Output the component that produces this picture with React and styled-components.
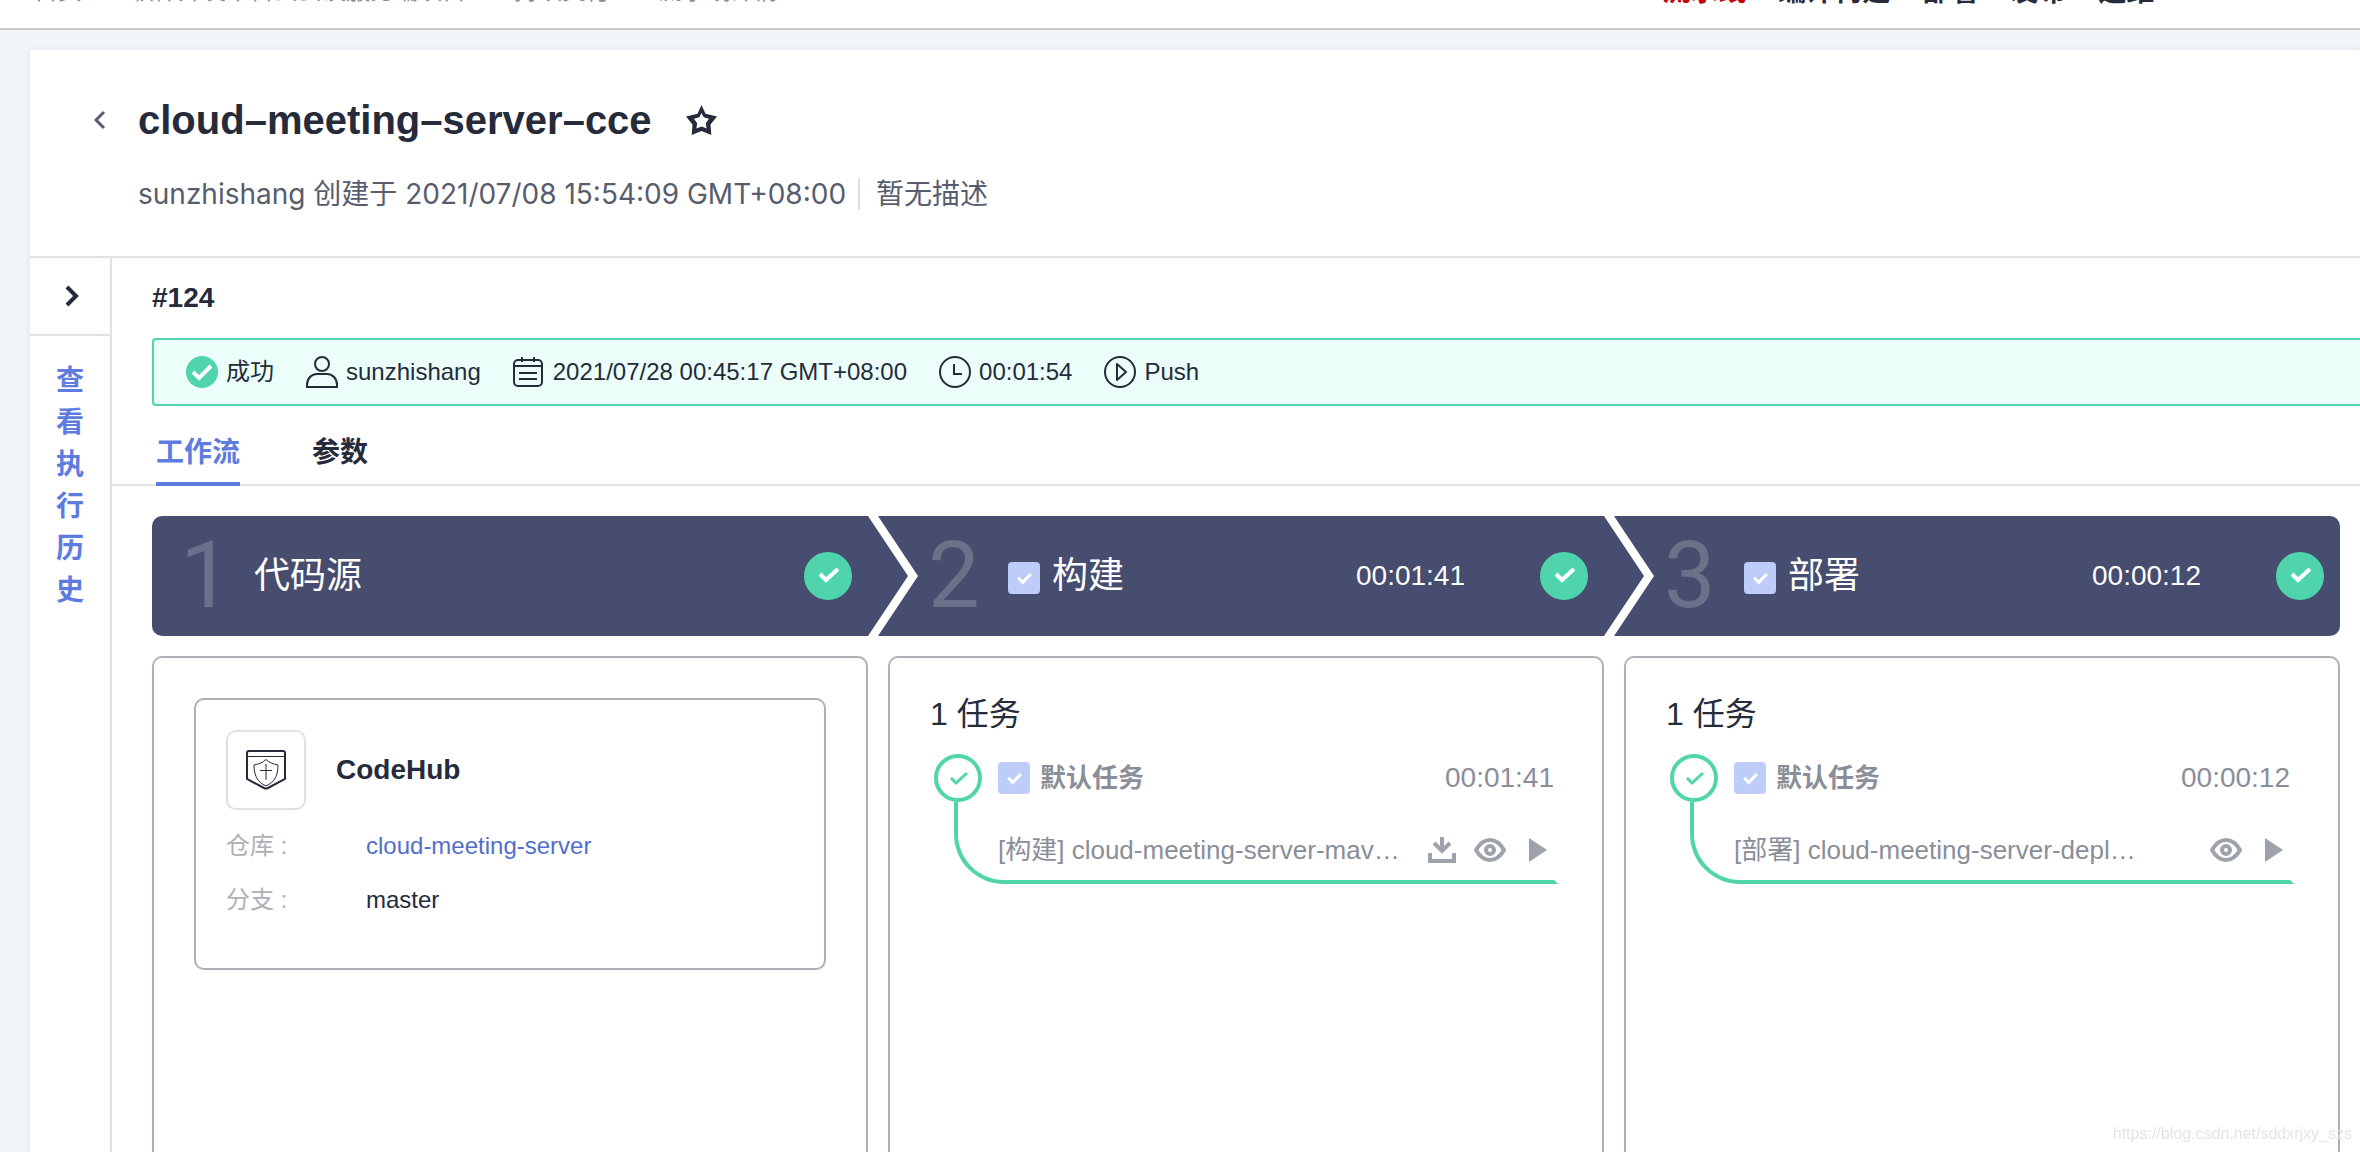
import React, { useState } from 'react';
import styled, { createGlobalStyle, css } from 'styled-components';

const GlobalStyle = createGlobalStyle`
  * {
    box-sizing: border-box;
  }
  body {
    margin: 0;
    background: #f0f5f8;
    color: #252b3a;
    font-family: "Liberation Sans", "Noto Sans CJK SC", sans-serif;
    font-size: 24px;
    line-height: 1.5;
  }
  h1, h2, h3, p, ol, ul, dl, dd {
    margin: 0;
    padding: 0;
  }
  ol, ul {
    list-style: none;
  }
  button {
    padding: 0;
    border: 0;
    background: none;
    color: inherit;
    font: inherit;
    cursor: pointer;
  }
  svg {
    display: block;
    flex: none;
  }
`;

const Page = styled.div`
  display: flex;
  flex-direction: column;
  height: 100vh;
  overflow: hidden;
`;

// scrolled almost out of view, only the feet of the labels stay visible
const TopBar = styled.header`
  flex: none;
  display: flex;
  align-items: flex-end;
  height: 30px;
  padding: 0 0 17px 34px;
  border-bottom: 2px solid #c8c8c8;
  background: #fff;
  overflow: hidden;
`;

const Crumbs = styled.nav`
  flex: 0 0 70%;
  display: flex;
  gap: 48px;
  line-height: 40px;
  a {
    color: #8a8e99;
    text-decoration: none;
  }
`;

const MainNav = styled.nav`
  display: flex;
  gap: 32px;
  font-size: 28px;
  font-weight: bold;
  line-height: 38px;
`;

const NavLink = styled.a`
  color: ${({ $active }) => ($active ? '#c7000b' : '#252b3a')};
  text-decoration: none;
  white-space: nowrap;
`;

const Panel = styled.div`
  flex: 1;
  display: flex;
  flex-direction: column;
  min-height: 0;
  margin: 20px 0 0 30px;
  background: #fff;
  box-shadow: 0 0 6px rgba(37, 43, 58, 0.08);
`;

const PipelineHeader = styled.div`
  padding: 40px 64px 42px;
  border-bottom: 2px solid #dfe1e6;
`;

const TitleRow = styled.div`
  display: flex;
  align-items: center;
  height: 60px;
`;

const BackButton = styled.button`
  width: 44px;
  color: #575d6c;
`;

const PipelineName = styled.h1`
  margin-right: 34px;
  font-size: 40px;
  font-weight: bold;
  line-height: 60px;
`;

const SubRow = styled.div`
  display: flex;
  align-items: center;
  margin: 24px 0 0 44px;
  color: #575d6c;
  font-family: Inter, "Noto Sans CJK SC", sans-serif;
  font-size: 28px;
  line-height: 40px;
`;

const Description = styled.p`
  margin-left: 12px;
  padding-left: 16px;
  border-left: 2px solid #dfe1e6;
  line-height: 32px;
`;

const Body = styled.div`
  flex: 1;
  display: flex;
  min-height: 0;
`;

const Sidebar = styled.aside`
  flex: none;
  display: flex;
  flex-direction: column;
  align-items: center;
  width: 82px;
  border-right: 2px solid #dfe1e6;
`;

const ExpandButton = styled.button`
  display: flex;
  align-items: center;
  justify-content: center;
  width: 100%;
  height: 78px;
  padding-left: 4px;
  border-bottom: 2px solid #dfe1e6;
`;

const HistoryButton = styled.button`
  width: 28px;
  margin-top: 24px;
  color: #5e7ce0;
  font-size: 28px;
  font-weight: bold;
  line-height: 42px;
  word-break: break-all;
`;

const Main = styled.main`
  flex: 1;
  display: flex;
  flex-direction: column;
  min-width: 0;
`;

const RunNumber = styled.h2`
  padding-left: 40px;
  font-size: 28px;
  line-height: 80px;
`;

const StatusBar = styled.ul`
  display: flex;
  align-items: center;
  gap: 32px;
  height: 68px;
  margin-left: 40px;
  padding-left: 32px;
  border: 2px solid #50d4ab;
  border-right: 0;
  border-radius: 4px 0 0 4px;
  background: #ebfef9;
`;

const StatusItem = styled.li`
  display: flex;
  align-items: center;
  gap: 8px;
  white-space: nowrap;
`;

const Tabs = styled.div`
  display: flex;
  gap: 72px;
  height: 80px;
  padding-left: 44px;
  border-bottom: 2px solid #dfe1e6;
`;

const Tab = styled.button`
  height: 80px;
  padding-top: 18px;
  border-bottom: 4px solid ${({ $active }) => ($active ? '#5e7ce0' : 'transparent')};
  color: ${({ $active }) => ($active ? '#5e7ce0' : '#252b3a')};
  font-size: 28px;
  font-weight: bold;
`;

const Workflow = styled.div`
  flex: 1;
  display: flex;
  flex-direction: column;
  gap: 20px;
  min-height: 0;
  padding: 30px 20px 0 40px;
`;

const columns = css`
  display: grid;
  grid-template-columns: repeat(3, minmax(0, 1fr));
  gap: 20px;
`;

const StageHeads = styled.ol`
  ${columns}
`;

const StageCards = styled.div`
  ${columns}
  flex: 1;
  min-height: 0;
`;

// each arrow pokes 40px into the next stage, whose notch leaves a 10px stripe
const StageHead = styled.li`
  display: flex;
  align-items: center;
  height: 120px;
  margin: 0 -40px 0 -10px;
  padding: 0 56px 0 50px;
  background: #474d6e;
  color: #fff;
  clip-path: polygon(0 0, calc(100% - 40px) 0, 100% 50%, calc(100% - 40px) 100%, 0 100%, 40px 50%);
  &:first-child {
    margin-left: 0;
    padding-left: 28px;
    border-radius: 10px 0 0 10px;
    clip-path: polygon(0 0, calc(100% - 40px) 0, 100% 50%, calc(100% - 40px) 100%, 0 100%);
  }
  &:last-child {
    margin-right: 0;
    padding-right: 16px;
    border-radius: 0 10px 10px 0;
    clip-path: polygon(0 0, 100% 0, 100% 100%, 0 100%, 40px 50%);
  }
`;

const StageIndex = styled.span`
  flex: none;
  width: 54px;
  color: #6c7189;
  font-family: Roboto, sans-serif;
  font-size: 92px;
  line-height: 120px;
`;

const StageLabel = styled.label`
  display: flex;
  align-items: center;
  gap: 12px;
  margin-left: ${({ $plain }) => ($plain ? 20 : 26)}px;
  font-size: 36px;
  white-space: nowrap;
  input {
    margin-top: 4px;
  }
`;

const StageTime = styled.span`
  margin: 0 75px 0 auto;
  font-size: 28px;
`;

const Push = styled.span`
  flex: 1;
`;

const CheckBox = styled.input`
  appearance: none;
  flex: none;
  display: grid;
  place-items: center;
  width: 32px;
  height: 32px;
  margin: 0;
  border-radius: 4px;
  background: #beccfa;
  &:checked::before {
    content: '';
    width: 10px;
    height: 5px;
    margin-bottom: 3px;
    border: solid #fff;
    border-width: 0 0 3px 3px;
    transform: rotate(-45deg);
  }
`;

const Card = styled.section`
  padding: ${({ $source }) => ($source ? '40px' : '32px 44px 0 40px')};
  border: 2px solid #adb0b8;
  border-bottom: 0;
  border-radius: 10px 10px 0 0;
`;

const SourceBox = styled.div`
  height: 272px;
  padding: 30px;
  border: 2px solid #adb0b8;
  border-radius: 10px;
`;

const SourceTitle = styled.div`
  display: flex;
  align-items: center;
  gap: 30px;
  font-size: 28px;
`;

const SourceIcon = styled.div`
  display: grid;
  place-items: center;
  width: 80px;
  height: 80px;
  border: 2px solid #dfe1e6;
  border-radius: 10px;
`;

const SourceName = styled.h3`
  font-size: 28px;
`;

const Fields = styled.dl`
  display: grid;
  grid-template-columns: 140px 1fr;
  margin-top: 9px;
  line-height: 54px;
  dt {
    color: #adb0b8;
  }
  a {
    color: #526ecc;
    text-decoration: none;
  }
`;

const TaskCount = styled.h3`
  font-size: 32px;
  font-weight: normal;
  line-height: 48px;
`;

const JobHead = styled.div`
  display: flex;
  align-items: center;
  gap: 16px;
  margin-top: 16px;
  padding: 0 4px;
  color: #8a8e99;
`;

const JobLabel = styled.label`
  flex: 1;
  display: flex;
  align-items: center;
  gap: 10px;
  font-size: 26px;
  font-weight: bold;
`;

const JobTime = styled.span`
  font-size: 28px;
`;

const Step = styled.div`
  display: flex;
  align-items: center;
  gap: 16px;
  height: 82px;
  margin-left: 24px;
  padding: 18px 0 0 40px;
  border: solid #50d4ab;
  border-width: 0 4px 4px;
  border-right-color: transparent;
  border-bottom-left-radius: 50px;
  color: #8a8e99;
  font-size: 26px;
`;

const StepName = styled.span`
  flex: 1;
  overflow: hidden;
  text-overflow: ellipsis;
  white-space: nowrap;
`;

const IconButton = styled.button`
  display: grid;
  place-items: center;
  width: 32px;
  height: 32px;
  color: #9da2ab;
`;

const Watermark = styled.span`
  position: fixed;
  right: 8px;
  bottom: 6px;
  color: #e4e4e4;
  font-size: 16px;
  line-height: 24px;
`;

function Svg({ w, h = w, sw = 2, children }) {
  return (
    <svg width={w} height={h} viewBox={`0 0 ${w} ${h}`} fill="none" stroke="currentColor" strokeWidth={sw} aria-hidden="true">
      {children}
    </svg>
  );
}

const BackIcon = () => <Svg w={12} h={20} sw={3}><path d="M10 2 2 10l8 8" /></Svg>;
const ExpandIcon = () => <Svg w={14} h={22} sw={4}><path d="m2 2 9 9-9 9" /></Svg>;
const StarIcon = () => (
  <Svg w={31} sw={0}>
    <path
      fill="currentColor"
      fillRule="evenodd"
      d="M15.500 0l4 8.800L31 11.500l-6.500 8 .8 10.500-9.800-4-9.800 4 .8-10.500L0 11.500l11.500-2.700zM15.500 8l-2.200 4.300-5.300 1.500 3.200 4.500-.8 5.200 5.100-2 5.100 2-.8-5.200 3.200-4.500-5.300-1.500z"
    />
  </Svg>
);
const SuccessIcon = () => (
  <Svg w={32} sw={4}><circle cx="16" cy="16" r="16" fill="#50d4ab" stroke="none" /><path d="m7 16 6 6 12-12" stroke="#fff" /></Svg>
);
const UserIcon = () => (
  <Svg w={32}><circle cx="16" cy="8" r="7" /><path d="M1 31v-2c0-6 4-11 10-11h10c6 0 10 5 10 11v2z" /></Svg>
);
const CalendarIcon = () => (
  <Svg w={32}><rect x="1" y="4" width="28" height="26" rx="4" /><path d="M1 10h28M9 1v5M21 1v5M6 17h18M6 23h18" /></Svg>
);
const ClockIcon = () => <Svg w={32}><circle cx="16" cy="16" r="15" /><path d="M15 8v10h8" /></Svg>;
const PlayCircleIcon = () => (
  <Svg w={32}><circle cx="16" cy="16" r="15" /><path d="M13 8v16l9-8z" strokeLinejoin="round" /></Svg>
);
const StageDoneIcon = () => (
  <Svg w={48} sw={4}><circle cx="24" cy="24" r="24" fill="#50d4ab" stroke="none" /><path d="m16 22 6 6 12-11" stroke="#fff" /></Svg>
);
const JobDoneIcon = () => (
  <Svg w={48} sw={3}><g stroke="#50d4ab"><circle cx="24" cy="24" r="22" strokeWidth="4" /><path d="m17 24 5 5 11-10" /></g></Svg>
);
const ShieldIcon = () => (
  <Svg w={40}>
    <path d="M3 1h34q2 0 2 2v26L22 38q-2 1-4 0L1 29V3q0-2 2-2z" />
    <path strokeWidth="1" d="M1 6.500h38M20 9.500c3 3 7 4.500 12 5.500 0 10-3 17-12 21-9-4-12-11-12-21 5-1 9-2.500 12-5.500zM20 14v16M14 20.500h12" />
  </Svg>
);
const DownloadIcon = () => <Svg w={28} h={26} sw={4}><path d="M14 0v14M6 6l8 8 8-8M2 16v8h24v-8" /></Svg>;
const EyeIcon = () => (
  <Svg w={32} h={24} sw={4}><path d="M2 12C6 5 11 2 16 2s10 3 14 10c-4 7-9 10-14 10S6 19 2 12z" /><circle cx="16" cy="12" r="4" /></Svg>
);
const PlayIcon = () => <Svg w={18} h={24} sw={0}><path d="M0 0v24l18-12z" fill="currentColor" /></Svg>;

const crumbs = ['首页', '软件开发平台云会议服务端项目', '持续交付', '流水线详情'];

const navItems = ['流水线', '编译构建', '部署', '发布', '运维'];

const stages = [
  { name: '代码源' },
  { name: '构建', time: '00:01:41', step: '[构建] cloud-meeting-server-mav…', download: true },
  { name: '部署', time: '00:00:12', step: '[部署] cloud-meeting-server-depl…' },
];

function StageHeader({ stage, index }) {
  return (
    <StageHead>
      <StageIndex>{index + 1}</StageIndex>
      <StageLabel $plain={!stage.time}>
        {stage.time && <CheckBox type="checkbox" defaultChecked />}
        {stage.name}
      </StageLabel>
      {stage.time ? <StageTime>{stage.time}</StageTime> : <Push />}
      <StageDoneIcon />
    </StageHead>
  );
}

function SourceCard() {
  return (
    <Card $source>
      <SourceBox>
        <SourceTitle>
          <SourceIcon><ShieldIcon /></SourceIcon>
          <SourceName>CodeHub</SourceName>
        </SourceTitle>
        <Fields>
          <dt>仓库 :</dt>
          <dd><a href="#repo">cloud-meeting-server</a></dd>
          <dt>分支 :</dt>
          <dd>master</dd>
        </Fields>
      </SourceBox>
    </Card>
  );
}

function TaskCard({ stage }) {
  return (
    <Card>
      <TaskCount>1 任务</TaskCount>
      <JobHead>
        <JobDoneIcon />
        <JobLabel>
          <CheckBox type="checkbox" defaultChecked />
          默认任务
        </JobLabel>
        <JobTime>{stage.time}</JobTime>
      </JobHead>
      <Step>
        <StepName>{stage.step}</StepName>
        {stage.download && <IconButton aria-label="下载"><DownloadIcon /></IconButton>}
        <IconButton aria-label="查看"><EyeIcon /></IconButton>
        <IconButton aria-label="执行"><PlayIcon /></IconButton>
      </Step>
    </Card>
  );
}

function App() {
  const [tab, setTab] = useState('工作流');

  return (
    <Page>
      <GlobalStyle />
      <TopBar>
        <Crumbs>
          {crumbs.map((d) => <a key={d} href="#crumb">{d}</a>)}
        </Crumbs>
        <MainNav>
          {navItems.map((d, i) => <NavLink key={d} href="#nav" $active={i === 0}>{d}</NavLink>)}
        </MainNav>
      </TopBar>
      <Panel>
        <PipelineHeader>
          <TitleRow>
            <BackButton aria-label="返回"><BackIcon /></BackButton>
            <PipelineName>cloud–meeting–server–cce</PipelineName>
            <button aria-label="收藏"><StarIcon /></button>
          </TitleRow>
          <SubRow>
            <p>sunzhishang 创建于 2021/07/08 15:54:09 GMT+08:00</p>
            <Description>暂无描述</Description>
          </SubRow>
        </PipelineHeader>
        <Body>
          <Sidebar>
            <ExpandButton aria-label="展开"><ExpandIcon /></ExpandButton>
            <HistoryButton>查看执行历史</HistoryButton>
          </Sidebar>
          <Main>
            <RunNumber>#124</RunNumber>
            <StatusBar>
              <StatusItem><SuccessIcon />成功</StatusItem>
              <StatusItem><UserIcon />sunzhishang</StatusItem>
              <StatusItem><CalendarIcon />2021/07/28 00:45:17 GMT+08:00</StatusItem>
              <StatusItem><ClockIcon />00:01:54</StatusItem>
              <StatusItem><PlayCircleIcon />Push</StatusItem>
            </StatusBar>
            <Tabs>
              {['工作流', '参数'].map((d) => (
                <Tab key={d} $active={tab === d} onClick={() => setTab(d)}>{d}</Tab>
              ))}
            </Tabs>
            <Workflow>
              <StageHeads>
                {stages.map((d, i) => <StageHeader key={d.name} stage={d} index={i} />)}
              </StageHeads>
              <StageCards>
                <SourceCard />
                {stages.slice(1).map((d) => <TaskCard key={d.name} stage={d} />)}
              </StageCards>
            </Workflow>
          </Main>
        </Body>
      </Panel>
      <Watermark>https://blog.csdn.net/sddxrjxy_szs</Watermark>
    </Page>
  );
}

export default App;
